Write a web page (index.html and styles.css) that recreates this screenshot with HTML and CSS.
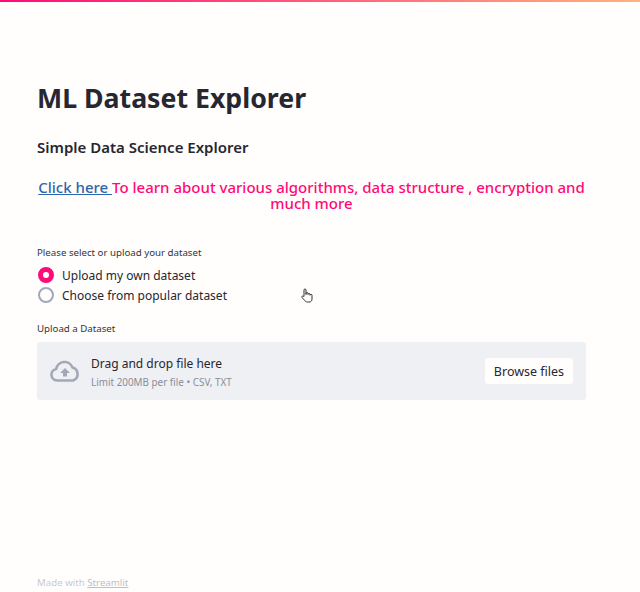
FILE: index.html
```html
<!DOCTYPE html>
<html>
<head>
<title>ML Dataset Explorer</title>
<meta name="viewport" content="width=device-width, initial-scale=1.0">
<link rel="stylesheet" href="styles.css">
</head>
<body>

<div class="top-bar"></div>

<div class="main">
  <h1>ML Dataset Explorer</h1>
  <h3>Simple Data Science Explorer</h3>

  <p class="promo"><a href="#">Click here </a>To learn about various algorithms, data structure , encryption and much more</p>

  <div class="field-label first">Please select or upload your dataset</div>
  <div class="radio-row">
    <span class="radio checked"></span>
    <span>Upload my own dataset</span>
  </div>
  <div class="radio-row">
    <span class="radio"></span>
    <span>Choose from popular dataset</span>
    <svg class="hand" width="14" height="15" viewBox="0 0 14 15" fill="#fff" stroke="#333" stroke-width="1" stroke-linejoin="round">
      <path d="M4 8.5V2a1 1 0 0 1 2 0v4.5V5.5a1 1 0 0 1 2 0v1a1 1 0 0 1 2 0v.8a1 1 0 0 1 2 0V11c0 1.800-1 3-3 3H7.500C6 14 5.300 13.300 4.500 12.200L2 9.500c-.8-1 .6-2 1.400-1.200z"/>
    </svg>
  </div>

  <div class="field-label upload-label">Upload a Dataset</div>
  <div class="dropzone">
    <svg class="cloud" width="30" height="22" viewBox="0 0 30 22">
      <path d="M7 20.500a5.800 5.800 0 0 1-.8-11.500 8.500 8.500 0 0 1 16.300-1.500 6.800 6.800 0 0 1 .5 13z" fill="none" stroke="#a3a8b8" stroke-width="2.600" stroke-linejoin="round"/>
      <path d="M15 8l5 5h-3v3.500h-4V13h-3z" fill="#a3a8b8"/>
    </svg>
    <div class="drop-text">
      <div class="drop-title">Drag and drop file here</div>
      <div class="drop-limit">Limit 200MB per file • CSV, TXT</div>
    </div>
    <button>Browse files</button>
  </div>
</div>

<div class="footer">Made with <a href="#">Streamlit</a></div>

</body>
</html>
```

FILE: styles.css
```css
html, body {
  height: 100%;
}
body {
  margin: 0;
  display: flex;
  flex-direction: column;
  height: 592px;
  overflow: hidden;
  box-sizing: border-box;
  background-color: #fffefc;
  color: #262730;
  font-family: "Noto Sans", sans-serif;
}
.top-bar {
  height: 2px;
  background-image: linear-gradient(90deg, #ff0a78, #ffb27f);
}
.main {
  flex: 1;
  width: 549px;
  padding: 0 0 0 37px;
}
h1 {
  margin: 78px 0 0 0;
  font-size: 26.700px;
  line-height: 36px;
  font-weight: 700;
}
h3 {
  margin: 21px 0 0 0;
  font-size: 15px;
  line-height: 20px;
  font-weight: 600;
}
.promo {
  margin: 22px 0 0 0;
  text-align: center;
  color: #ff0a78;
  font-size: 15px;
  line-height: 16px;
  font-weight: 500;
}
.promo a {
  color: #2d66ad;
}
.field-label {
  font-size: 9.700px;
  line-height: 14px;
  color: #33343d;
}
.first {
  margin-top: 35px;
  margin-bottom: 5px;
}
.radio-row {
  display: flex;
  align-items: center;
  height: 20px;
  font-size: 12px;
}
.radio {
  width: 16px;
  height: 16px;
  margin-left: 1px;
  margin-right: 8px;
  border-radius: 50%;
  border: 2px solid #a3a8b8;
  box-sizing: border-box;
  background-color: #fffefc;
}
.radio.checked {
  border: 5px solid #ff0a78;
  background-color: #fff;
}
.hand {
  margin-left: 73px;
}
.upload-label {
  margin-top: 17px;
  margin-bottom: 6px;
}
.dropzone {
  display: flex;
  align-items: center;
  height: 58px;
  padding: 0 13px 0 13px;
  background-color: #eff0f3;
  border-radius: 3px;
}
.cloud {
  flex: none;
  margin-right: 11px;
}
.drop-text {
  flex: 1;
  padding-top: 2px;
}
.drop-title {
  font-size: 12px;
  line-height: 18px;
}
.drop-limit {
  margin-top: 2px;
  font-size: 9.900px;
  line-height: 14px;
  color: #8a8d99;
}
button {
  height: 26px;
  width: 88px;
  padding: 0;
  border: none;
  border-radius: 3px;
  background-color: #fffefc;
  color: #262730;
  font-family: "Noto Sans", sans-serif;
  font-size: 12.500px;
}
.footer {
  padding: 0 0 2px 37px;
  font-size: 9.700px;
  line-height: 14px;
  color: #c9cad0;
}
.footer a {
  color: #bcbec8;
}
```
